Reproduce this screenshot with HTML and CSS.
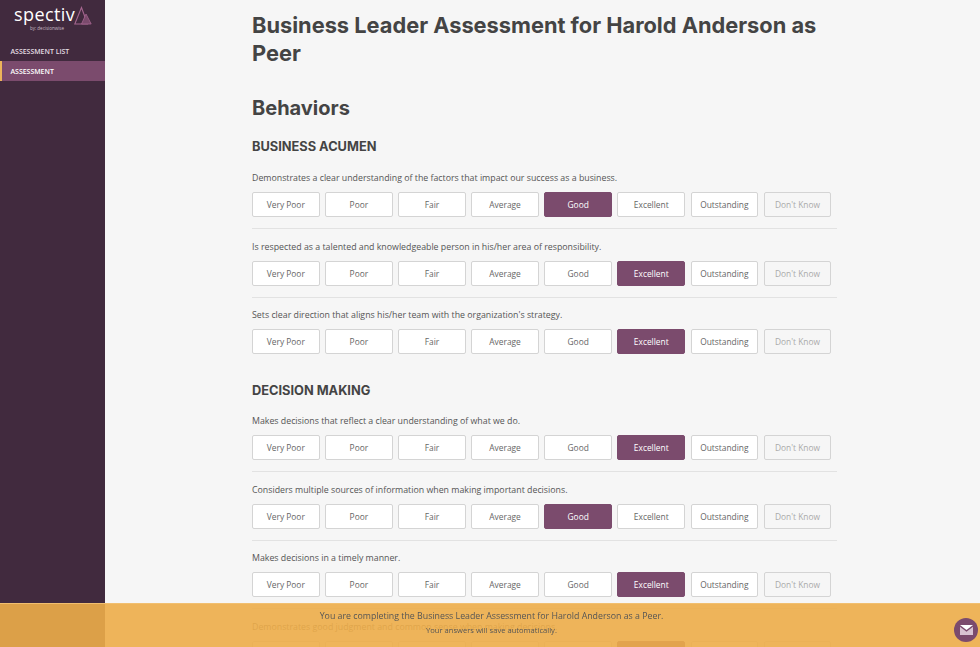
FILE: index.html
```html
<!DOCTYPE HTML>
<html>
<head>
<meta http-equiv="Content-Type" content="text/html; charset=utf-8">
<title>Assessment</title>
<link rel="stylesheet" href="styles.css">
</head>

<body>
<div class="app">
<div class="sidebar">
  <div class="logo">
    <div class="logo-name">
      <span class="logo-text">spectiv</span>
      <svg class="logo-mark" width="18" height="20" viewBox="0 0 18 20">
        <path d="M7.5 1.5 L0.8 18 L13.5 18 Z" fill="none" stroke="#a5668f" stroke-width="1.1"/>
        <path d="M12 8 L7.5 18 L17.2 18 Z" fill="#7a4a6c" stroke="#a5668f" stroke-width="0.8"/>
      </svg>
    </div>
    <div class="logo-by">by: decisionwise</div>
  </div>
  <ul class="menu">
    <li><a href="#">ASSESSMENT LIST</a></li>
    <li class="active"><a href="#">ASSESSMENT</a></li>
  </ul>
</div>

<div class="main">
  <h1>Business Leader Assessment for Harold Anderson as Peer</h1>
  <h2>Behaviors</h2>

  <h3>BUSINESS ACUMEN</h3>
  <div class="question">
    <p>Demonstrates a clear understanding of the factors that impact our success as a business.</p>
    <div class="scale">
      <button>Very Poor</button><button>Poor</button><button>Fair</button><button>Average</button><button class="on">Good</button><button>Excellent</button><button>Outstanding</button><button class="dk">Don't Know</button>
    </div>
  </div>
  <div class="question">
    <p>Is respected as a talented and knowledgeable person in his/her area of responsibility.</p>
    <div class="scale">
      <button>Very Poor</button><button>Poor</button><button>Fair</button><button>Average</button><button>Good</button><button class="on">Excellent</button><button>Outstanding</button><button class="dk">Don't Know</button>
    </div>
  </div>
  <div class="question last">
    <p>Sets clear direction that aligns his/her team with the organization's strategy.</p>
    <div class="scale">
      <button>Very Poor</button><button>Poor</button><button>Fair</button><button>Average</button><button>Good</button><button class="on">Excellent</button><button>Outstanding</button><button class="dk">Don't Know</button>
    </div>
  </div>

  <h3 class="next">DECISION MAKING</h3>
  <div class="question">
    <p>Makes decisions that reflect a clear understanding of what we do.</p>
    <div class="scale">
      <button>Very Poor</button><button>Poor</button><button>Fair</button><button>Average</button><button>Good</button><button class="on">Excellent</button><button>Outstanding</button><button class="dk">Don't Know</button>
    </div>
  </div>
  <div class="question">
    <p>Considers multiple sources of information when making important decisions.</p>
    <div class="scale">
      <button>Very Poor</button><button>Poor</button><button>Fair</button><button>Average</button><button class="on">Good</button><button>Excellent</button><button>Outstanding</button><button class="dk">Don't Know</button>
    </div>
  </div>
  <div class="question">
    <p>Makes decisions in a timely manner.</p>
    <div class="scale">
      <button>Very Poor</button><button>Poor</button><button>Fair</button><button>Average</button><button>Good</button><button class="on">Excellent</button><button>Outstanding</button><button class="dk">Don't Know</button>
    </div>
  </div>
  <div class="question last">
    <p>Demonstrates good judgment and common sense when making decisions.</p>
    <div class="scale">
      <button>Very Poor</button><button>Poor</button><button>Fair</button><button>Average</button><button>Good</button><button class="on">Excellent</button><button>Outstanding</button><button class="dk">Don't Know</button>
    </div>
  </div>
</div>
</div>

<div class="notice">
  <p>You are completing the Business Leader Assessment for Harold Anderson as a Peer.</p>
  <p class="small">Your answers will save automatically.</p>
</div>
<a class="chat" href="#">
  <svg width="13" height="10" viewBox="0 0 13 10">
    <path d="M0 0 H13 L6.5 5 Z" fill="#fff"/>
    <path d="M0 1.8 L6.5 6.8 L13 1.8 V10 H0 Z" fill="#d8c3d2"/>
  </svg>
</a>
</body>
</html>
```

FILE: styles.css
```css
body{margin:0;background:#f6f6f6;font-family:"Open Sans","Liberation Sans",sans-serif;color:#555;}
h1, h2, h3, p, ul{margin:0;padding:0;list-style-type:none;}
.app{display:flex;height:100vh;overflow:hidden;}

.sidebar{width:105px;flex-shrink:0;background:#412a3e;}
.logo{height:41px;padding:3px 0 0 14px;box-sizing:border-box;color:#fff;}
.logo-name{display:flex;align-items:flex-end;height:22px;}
.logo-text{font-size:18px;line-height:22px;letter-spacing:.4px;}
.logo-mark{margin:0 0 -1px -1px;}
.logo-by{font-size:4.5px;line-height:6px;padding-left:16px;color:#cbbcc8;}
.menu{font-size:6.95px;font-weight:600;}
.menu li{height:20px;line-height:21px;padding-left:10.5px;}
.menu a{color:#e4dde3;text-decoration:none;}
.menu .active{background:#7b4b6d;border-left:2px solid #eeb45a;padding-left:8.5px;}
.menu .active a{color:#fff;}

.main{flex:1;padding:11px 143px 0 147px;color:#444;}
h1{font-family:Inter,"Liberation Sans",sans-serif;font-size:21.8px;font-weight:700;line-height:28px;color:#444;}
h2{font-family:Inter,"Liberation Sans",sans-serif;font-size:20px;font-weight:700;line-height:28px;margin-top:27px;color:#444;}
h3{font-family:Inter,"Liberation Sans",sans-serif;font-size:12.8px;font-weight:700;line-height:18px;margin-top:16px;margin-bottom:15px;color:#444;}
h3.next{margin-top:28px;margin-bottom:14px;}

.question{padding-bottom:11px;border-bottom:1px solid #e2e2e2;}
.question + .question{padding-top:10.5px;}
.question.last{padding-bottom:0;border-bottom:0;}
.question p{font-size:8.8px;line-height:14px;margin-bottom:7px;color:#555;}
.scale{display:flex;gap:5.5px;}
.scale button{width:67.6px;height:25px;padding:0;box-sizing:border-box;background:#fff;border:1px solid #d4d4d4;border-radius:2px;font-family:"Open Sans","Liberation Sans",sans-serif;font-size:8.4px;color:#666;}
.scale .on{background:#7b4b6d;border-color:#7b4b6d;color:#fff;}
.scale .dk{background:#f6f6f6;color:#aaa;}

.notice{position:fixed;left:0;right:0;bottom:0;height:44px;box-sizing:border-box;padding:5px 0 0 3px;background:rgba(237,173,73,.9);border-top:1px solid #f1bf70;text-align:center;font-size:8.8px;line-height:14px;color:#555;}
.notice .small{font-size:7.6px;line-height:15px;color:#555;}
.chat{position:fixed;right:2px;bottom:5px;width:24px;height:24px;border-radius:50%;background:#7b4b6d;display:flex;align-items:center;justify-content:center;}
```
